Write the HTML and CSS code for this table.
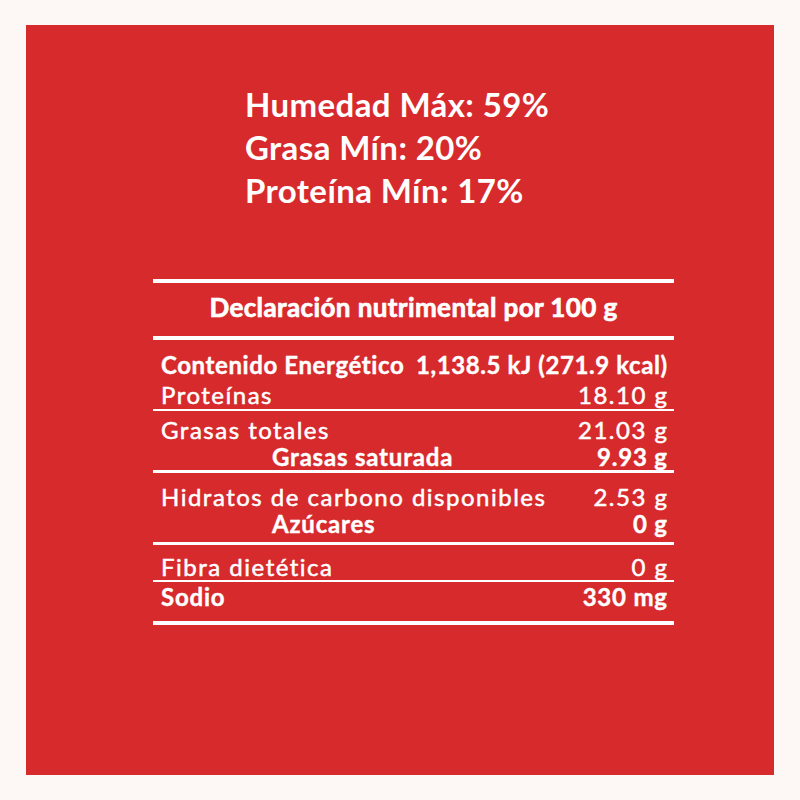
FILE: index.html
```html
<!DOCTYPE html>
<html lang="es">
<head>
<meta charset="utf-8">
<title>Declaración nutrimental</title>
<link rel="stylesheet" href="styles.css">
</head>
<body>
<div class="panel">
  <div class="specs">
    <div class="spec">Humedad Máx: 59%</div>
    <div class="spec">Grasa Mín: 20%</div>
    <div class="spec">Proteína Mín: 17%</div>
  </div>
  <div class="table">
    <div class="head">Declaración nutrimental por 100 g</div>
    <div class="row energy bold"><span>Contenido Energético</span><span>1,138.5 kJ (271.9 kcal)</span></div>
    <div class="row prot rule-thin"><span>Proteínas</span><span>18.10 g</span></div>
    <div class="row fat"><span>Grasas totales</span><span>21.03 g</span></div>
    <div class="row sat bold rule-mid"><span class="indent">Grasas saturada</span><span>9.93 g</span></div>
    <div class="row carb"><span>Hidratos de carbono disponibles</span><span>2.53 g</span></div>
    <div class="row sugar bold rule-mid"><span class="indent">Azúcares</span><span>0 g</span></div>
    <div class="row fiber rule-thin"><span>Fibra dietética</span><span>0 g</span></div>
    <div class="row sodium bold rule-thick"><span>Sodio</span><span>330 mg</span></div>
  </div>
</div>
</body>
</html>
```

FILE: styles.css
```css
html, body {
  margin: 0;
  padding: 0;
  background: #fdf7f6;
}

.panel {
  margin: 25px 0 0 26px;
  width: 748px;
  height: 750px;
  background: #d72a2d;
  color: #fff;
  font-family: Lato, "Open Sans", sans-serif;
  padding-top: 58px;
  box-sizing: border-box;
}

.specs {
  padding-left: 219px;
}

.spec {
  font-size: 33px;
  line-height: 43px;
  font-weight: 700;
  letter-spacing: 0.4px;
}

.table {
  margin: 67px 0 0 127px;
  width: 521px;
  border-top: 4px solid #fff;
}

.head {
  font-size: 26px;
  line-height: 48px;
  font-weight: 700;
  text-align: center;
  padding-bottom: 5px;
  border-bottom: 4px solid #fff;
  letter-spacing: 0.4px;
  -webkit-text-stroke: 0.7px #fff;
}

.row {
  display: flex;
  justify-content: space-between;
  font-size: 24px;
  line-height: 27px;
  padding: 0 7px 0 8px;
  letter-spacing: 1.5px;
  white-space: nowrap;
  -webkit-text-stroke: 0.5px #fff;
}

.row span:last-child {
  margin-right: -1.5px;
}

.bold {
  font-weight: 700;
  letter-spacing: 0.8px;
  -webkit-text-stroke: 0.4px #fff;
}

.bold span:last-child {
  margin-right: -0.8px;
}

.indent {
  padding-left: 111px;
}

.energy {
  padding-top: 10px;
  line-height: 30px;
  letter-spacing: 0.6px;
}

.prot {
  line-height: 29px;
}

.fat {
  padding-top: 5px;
}

.carb {
  padding-top: 10px;
}

.sugar {
  padding-bottom: 5px;
}

.fiber {
  padding-top: 8px;
}

.sodium {
  padding-top: 1px;
  padding-bottom: 11px;
}

.rule-thin {
  border-bottom: 2px solid #fff;
}

.rule-mid {
  border-bottom: 3px solid #fff;
}

.rule-thick {
  border-bottom: 4px solid #fff;
}
```
